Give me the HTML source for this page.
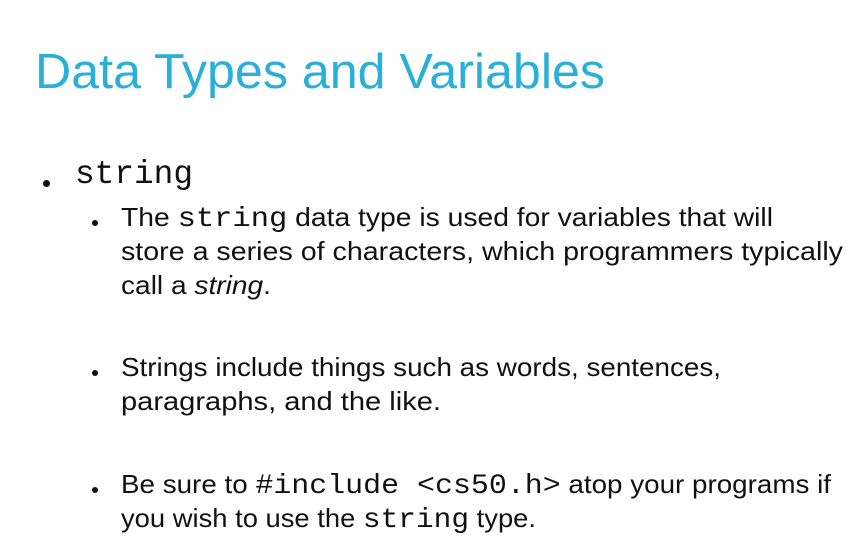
<!DOCTYPE html>
<html><head><meta charset="utf-8"><style>
html,body{margin:0;padding:0;background:#fff;width:863px;height:555px;overflow:hidden;font-family:"Liberation Sans",sans-serif;color:#111}
.l{position:absolute;white-space:nowrap;transform-origin:0 0;line-height:1}
.m{font-family:"Liberation Mono",monospace}
.t{color:#2ab0d8;font-size:49px}
.s{font-size:26px}
.b{position:absolute;width:6px;height:6px;border-radius:50%;background:#111}
</style></head><body>
<div class="l t" data-w="570" style="left:35px;top:48px">Data Types and Variables</div>
<div class="b" style="left:43px;top:180px;width:7px;height:7px"></div>
<div class="l m" data-w="118" style="left:75px;top:158px;font-size:33px">string</div>
<div class="b" style="left:92px;top:220px"></div>
<div class="l s" data-w="652" style="left:121px;top:204px">The <span class="m" style="font-size:28px">string</span> data type is used for variables that will</div>
<div class="l s" data-w="722" style="left:121px;top:238px">store a series of characters, which programmers typically</div>
<div class="l s" data-w="150" style="left:121px;top:272px">call a <i>string</i>.</div>
<div class="b" style="left:92px;top:370px"></div>
<div class="l s" data-w="600" style="left:121px;top:354px">Strings include things such as words, sentences,</div>
<div class="l s" data-w="320" style="left:121px;top:388px">paragraphs, and the like.</div>
<div class="b" style="left:92px;top:487px"></div>
<div class="l s" data-w="710" style="left:121px;top:471px">Be sure to <span class="m" style="font-size:28px">#include &lt;cs50.h&gt;</span> atop your programs if</div>
<div class="l s" data-w="415" style="left:121px;top:505px">you wish to use the <span class="m" style="font-size:28px">string</span> type.</div>
<script>
document.querySelectorAll('[data-w]').forEach(function(e){var w=e.getBoundingClientRect().width;e.style.transform='scaleX('+(e.dataset.w/w)+')';});
</script>
</body></html>
